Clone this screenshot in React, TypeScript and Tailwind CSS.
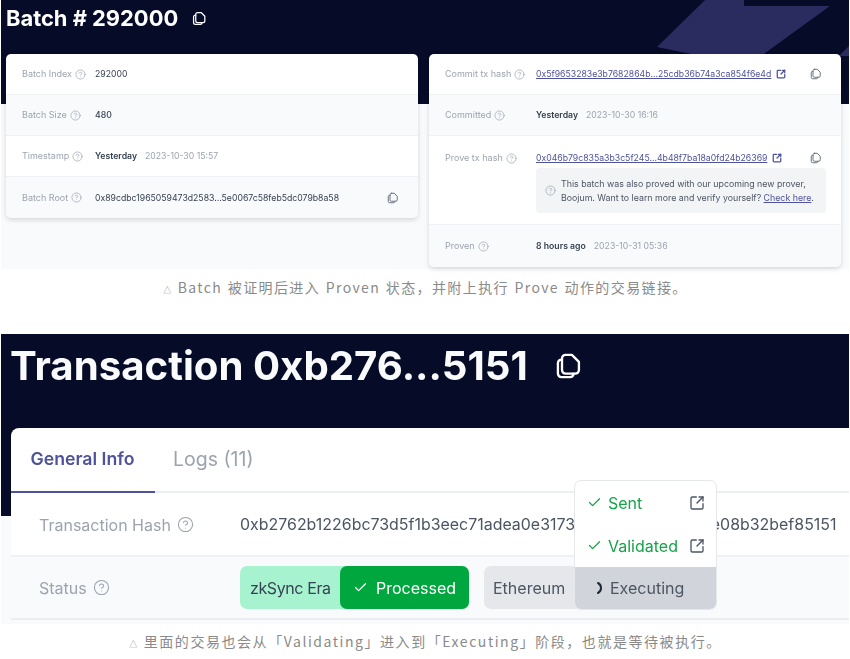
import React from "react";
import { Check, CircleHelp, SquareArrowOutUpRight } from "lucide-react";

function CopyIcon({ className }: { className?: string }) {
  return (
    <svg viewBox="0 0 24 24" fill="none" stroke="currentColor" strokeWidth="2" strokeLinejoin="round" strokeLinecap="round" className={className}>
      <path d="M9 2.500h5.500L20.500 8.500v7a3 3 0 0 1-3 3H9a3 3 0 0 1-3-3v-10a3 3 0 0 1 3-3z" />
      <path d="M6 6.500H5.500a3 3 0 0 0-3 3v9a3 3 0 0 0 3 3h7.500a3 3 0 0 0 3-3" />
    </svg>
  );
}

function Help({ className = "h-[11px] w-[11px]" }: { className?: string }) {
  return <CircleHelp strokeWidth={1.5} className={`${className} flex-none text-gray-400`} />;
}

function Label({ children }: { children: React.ReactNode }) {
  return (
    <span className="flex items-center gap-[3px] text-[9px] leading-[14px] text-[#9ca3af]">
      {children}
      <Help />
    </span>
  );
}

function Row({
  label,
  alt,
  children,
  labelWidth,
  className = "h-[41px] items-center",
}: {
  label: string;
  alt?: boolean;
  children: React.ReactNode;
  labelWidth: string;
  className?: string;
}) {
  return (
    <div className={`flex border-b border-[#f0f1f4] pl-[16px] last:border-b-0 ${alt ? "bg-[#f9fafb]" : "bg-white"} ${className}`}>
      <div className={`flex-none ${labelWidth}`}>
        <Label>{label}</Label>
      </div>
      {children}
    </div>
  );
}

function Time({ rel, abs }: { rel: string; abs: string }) {
  return (
    <span className="flex gap-2 text-[8.7px] leading-[14px]">
      <span className="font-semibold text-[#374151]">{rel}</span>
      <span className="text-[#9ca3af]">{abs}</span>
    </span>
  );
}

function TxLink({ hash }: { hash: string }) {
  return (
    <span className="flex items-center gap-[5px] text-[8.7px] leading-[14px] text-[#4e529a]">
      <span className="underline">{hash}</span>
      <SquareArrowOutUpRight strokeWidth={3} className="h-[10px] w-[10px]" />
    </span>
  );
}

function Caption({ children, className }: { children: React.ReactNode; className?: string }) {
  return (
    <p
      className={`text-center text-[14px] text-[#8a8a8a] [font-family:'Noto_Sans_CJK_SC','Noto_Sans',sans-serif] ${className}`}
    >
      <span className="mr-[5px] text-[8px]">△</span>
      {children}
    </p>
  );
}

export default function App() {
  return (
    <div className="h-[659px] w-[850px] overflow-hidden bg-white pl-px [font-family:Inter,sans-serif]">
      <section className="h-[269px] w-[848px] bg-[#f9fafb] blur-[0.5px]">
        <div className="relative h-[104px] overflow-hidden bg-[#060b27]">
          <svg className="absolute inset-0 h-full w-full" viewBox="0 0 848 104" fill="#2a2b5e">
            <path d="M656 47 704 0H743V6H829L760 56H700Z" />
            <path d="M848 46 838 56H848Z" />
          </svg>
          <div className="relative flex items-center gap-[14px] pl-[5px] pt-[3px]">
            <h1 className="text-[21.9px] leading-[30px] font-bold text-white">Batch # 292000</h1>
            <CopyIcon className="h-[15px] w-[15px] text-white" />
          </div>
        </div>

        <div className="relative -mt-[50px] flex gap-[11px] px-[5px]">
          <div className="h-fit w-[412px] overflow-hidden rounded-[5px] shadow-[0_2px_5px_rgba(0,0,0,0.14)]">
            <Row label="Batch Index" labelWidth="w-[73px]">
              <span className="text-[8.7px] leading-[14px] text-[#374151]">292000</span>
            </Row>
            <Row label="Batch Size" labelWidth="w-[73px]" alt>
              <span className="text-[8.7px] leading-[14px] font-medium text-[#374151]">480</span>
            </Row>
            <Row label="Timestamp" labelWidth="w-[73px]">
              <Time rel="Yesterday" abs="2023-10-30 15:57" />
            </Row>
            <Row label="Batch Root" labelWidth="w-[73px]" alt>
              <span className="flex-1 text-[8.7px] leading-[14px] text-[#374151]">0x89cdbc1965059473d2583...5e0067c58feb5dc079b8a58</span>
              <CopyIcon className="mr-[19px] h-[12px] w-[12px] text-gray-500" />
            </Row>
          </div>

          <div className="w-[412px] overflow-hidden rounded-[5px] shadow-[0_2px_5px_rgba(0,0,0,0.14)]">
            <Row label="Commit tx hash" labelWidth="w-[91px]">
              <div className="flex-1">
                <TxLink hash="0x5f9653283e3b7682864b...25cdb36b74a3ca854f6e4d" />
              </div>
              <CopyIcon className="mr-[19px] h-[12px] w-[12px] text-gray-500" />
            </Row>
            <Row label="Committed" labelWidth="w-[91px]" alt>
              <Time rel="Yesterday" abs="2023-10-30 16:16" />
            </Row>
            <Row label="Prove tx hash" labelWidth="w-[91px]" className="h-[89px] items-start pt-[15px]">
              <div className="flex-1 pr-[15px]">
                <div className="flex items-center justify-between pr-[4px]">
                  <TxLink hash="0x046b79c835a3b3c5f245...4b48f7ba18a0fd24b26369" />
                  <CopyIcon className="h-[12px] w-[12px] text-gray-500" />
                </div>
                <div className="mt-[3px] flex h-[45px] w-[290px] items-center gap-[5px] rounded-[4px] bg-[#f3f4f6] pl-[9px]">
                  <Help />
                  <p className="text-[8.8px] leading-[13.5px] text-[#4b5563]">
                    This batch was also proved with our upcoming new prover,
                    <br />
                    Boojum. Want to learn more and verify yourself?{" "}
                    <span className="text-[#4e529a] underline">Check here</span>.
                  </p>
                </div>
              </div>
            </Row>
            <Row label="Proven" labelWidth="w-[91px]" alt className="h-[42px] items-center">
              <Time rel="8 hours ago" abs="2023-10-31 05:36" />
            </Row>
          </div>
        </div>
      </section>

      <Caption className="mt-[8px] h-[20px] leading-[20px] tracking-[1.4px] [word-spacing:1px]">
        Batch 被证明后进入 Proven 状态，并附上执行 Prove 动作的交易链接。
      </Caption>

      <section className="relative mt-[37px] h-[290px] w-[848px] overflow-hidden bg-[#f9fafb] blur-[0.4px]">
        <div className="h-[182px] bg-[#060b27] pl-[9px] pt-[8px]">
          <div className="flex items-center gap-[27px]">
            <h1 className="text-[40.2px] leading-[48px] font-bold text-[#f9fafb]">Transaction 0xb276...5151</h1>
            <CopyIcon className="h-[28px] w-[28px] text-white" />
          </div>
        </div>

        <div className="absolute left-[10px] top-[94px] w-[838px] rounded-tl-[8px] bg-white">
          <div className="flex h-[65px] border-b-2 border-[#eceef1]">
            <div className="-mb-[2px] flex w-[144px] items-center justify-center border-b-2 border-[#4e529a] pr-px text-[17.7px] font-semibold text-[#4e529a]">
              General Info
            </div>
            <div className="flex items-center pl-[18px] text-[19.5px] text-[#9ca3af]">Logs (11)</div>
          </div>
          <div className="flex h-[64px] items-center border-b-2 border-[#f0f1f4] pl-[28px] pt-px">
            <span className="flex w-[201px] flex-none items-center gap-[6px] text-[16px] text-[#9ca3af]">
              Transaction Hash
              <Help className="h-[17px] w-[17px]" />
            </span>
            <span className="text-[15.95px] whitespace-nowrap text-[#4b5563]">0xb2762b1226bc73d5f1b3eec71adea0e3173c4d7a9e1f0c6b2de08b32bef85151</span>
          </div>
          <div className="flex h-[63px] items-center border-b-2 border-[#eceef1] bg-[#f9fafb] pl-[28px]">
            <span className="flex w-[201px] items-center gap-[6px] text-[16px] text-[#9ca3af]">
              Status
              <Help className="h-[17px] w-[17px]" />
            </span>
            <div className="flex h-[43px] w-[229px] items-center rounded-[7px] bg-[#a7f3d0] pl-[10px] text-[16px] text-[#374151]">
              <span className="w-[90px] tracking-[-0.4px]">zkSync Era</span>
              <span className="flex h-[43px] flex-1 items-center gap-[8px] rounded-[7px] bg-[#00a63e] pl-[13px] text-white">
                <Check className="h-[15px] w-[15px]" strokeWidth={2} />
                Processed
              </span>
            </div>
            <div className="ml-[15px] flex h-[43px] w-[120px] items-center rounded-l-[7px] bg-[#e5e7eb] pl-[9px] text-[16px] text-[#4b5563]">
              Ethereum
            </div>
          </div>
        </div>

        <div className="absolute left-[573px] top-[146px] w-[143px] overflow-hidden rounded-[7px] border border-[#e5e7eb] bg-white text-[16px]">
          <div className="flex h-[43px] items-center pl-[12px] pr-[11px] text-[#16a34a]">
            <Check className="mr-[6px] h-[15px] w-[15px]" strokeWidth={2} />
            <span className="flex-1">Sent</span>
            <SquareArrowOutUpRight className="h-[16px] w-[16px] text-[#4b5563]" strokeWidth={2} />
          </div>
          <div className="flex h-[43px] items-center pl-[12px] pr-[11px] text-[#16a34a]">
            <Check className="mr-[6px] h-[15px] w-[15px]" strokeWidth={2} />
            <span className="flex-1">Validated</span>
            <SquareArrowOutUpRight className="h-[16px] w-[16px] text-[#4b5563]" strokeWidth={2} />
          </div>
          <div className="flex h-[42px] items-center bg-[#d1d5db] pl-[21px] text-[#4b5563]">
            <svg viewBox="0 0 8 14" className="mr-[6px] h-[14px] w-[8px]" fill="none" stroke="#1f2937" strokeWidth="2" strokeLinecap="round">
              <path d="M2 2c2 1 3 3 3 5s-1 4-3 5" />
            </svg>
            Executing
          </div>
        </div>
      </section>

      <Caption className="mt-[7px] h-[20px] leading-[20px] tracking-[1.55px]">
        里面的交易也会从「Validating」进入到「Executing」阶段，也就是等待被执行。
      </Caption>
    </div>
  );
}
